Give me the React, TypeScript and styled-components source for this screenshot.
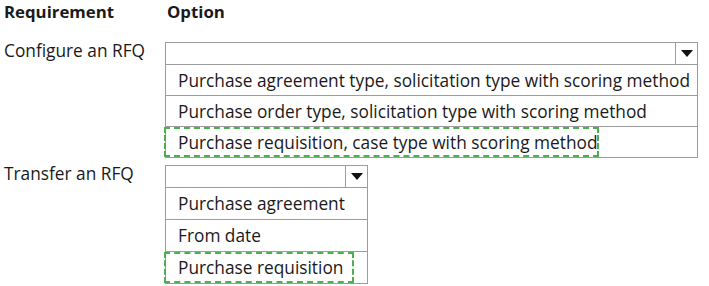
import styled, { createGlobalStyle } from "styled-components";

const GlobalStyle = createGlobalStyle`
  html, body {
    margin: 0;
    padding: 0;
    background: #ffffff;
  }
  body {
    font-family: "Open Sans", "Noto Sans", sans-serif;
    color: #1a1a1a;
  }
`;

const Page = styled.div`
  width: 709px;
  height: 286px;
  padding: 0 0 0 4px;
  box-sizing: border-box;
  display: grid;
  grid-template-columns: 161px auto;
  grid-template-rows: 42px auto auto;
  align-items: start;
  font-size: 17.3px;
`;

const Heading = styled.div<{ $indent?: number }>`
  font-weight: 700;
  font-size: 16.8px;
  line-height: 24px;
  margin-left: ${({ $indent }) => $indent ?? 0}px;
`;

const Label = styled.div<{ $top?: number }>`
  line-height: 22px;
  margin-top: ${({ $top }) => $top ?? 0}px;
`;

const Dropdown = styled.div<{ $width: number; $top?: number }>`
  width: ${({ $width }) => $width}px;
  margin-top: ${({ $top }) => $top ?? 0}px;
  border: 1px solid #9c9c9c;
  box-sizing: border-box;
`;

const SelectBar = styled.div`
  height: 21px;
  display: flex;
  justify-content: flex-end;
  border-bottom: 1px solid #9c9c9c;
`;

const ArrowBox = styled.div`
  width: 21px;
  border-left: 1px solid #9c9c9c;
  display: flex;
  align-items: center;
  justify-content: center;
`;

const Arrow = styled.span`
  width: 0;
  height: 0;
  border-left: 6px solid transparent;
  border-right: 6px solid transparent;
  border-top: 7px solid #111;
`;

const Item = styled.div<{ $last?: boolean; $h: number }>`
  height: ${({ $h }) => $h}px;
  display: flex;
  align-items: center;
  padding-left: 12px;
  border-bottom: ${({ $last }) => ($last ? "none" : "1px solid #9c9c9c")};
  white-space: nowrap;
`;

const Chosen = styled.span<{ $pad: number }>`
  align-self: stretch;
  display: flex;
  align-items: center;
  margin-left: -14px;
  padding: 0 ${({ $pad }) => $pad}px 0 12px;
  border: 2px dashed #4cb050;
`;

type Choice = { text: string; chosen?: boolean; pad?: number };

const Select = ({
  width,
  top,
  rowHeight,
  items,
}: {
  width: number;
  top?: number;
  rowHeight: number;
  items: Choice[];
}) => (
  <Dropdown $width={width} $top={top}>
    <SelectBar>
      <ArrowBox>
        <Arrow />
      </ArrowBox>
    </SelectBar>
    {items.map((it, i) => (
      <Item key={it.text} $h={rowHeight} $last={i === items.length - 1}>
        {it.chosen ? <Chosen $pad={it.pad ?? 4}>{it.text}</Chosen> : it.text}
      </Item>
    ))}
  </Dropdown>
);

export default function App() {
  return (
    <>
      <GlobalStyle />
      <Page>
        <Heading>Requirement</Heading>
        <Heading $indent={2}>Option</Heading>
        <Label $top={-2}>Configure an RFQ</Label>
        <Select
          width={533}
          rowHeight={30}
          items={[
            { text: "Purchase agreement type, solicitation type with scoring method" },
            { text: "Purchase order type, solicitation type with scoring method" },
            { text: "Purchase requisition, case type with scoring method", chosen: true, pad: 0 },
          ]}
        />
        <Label $top={3}>Transfer an RFQ</Label>
        <Select
          width={203}
          top={5}
          rowHeight={31}
          items={[
            { text: "Purchase agreement" },
            { text: "From date" },
            { text: "Purchase requisition", chosen: true, pad: 9 },
          ]}
        />
      </Page>
    </>
  );
}
